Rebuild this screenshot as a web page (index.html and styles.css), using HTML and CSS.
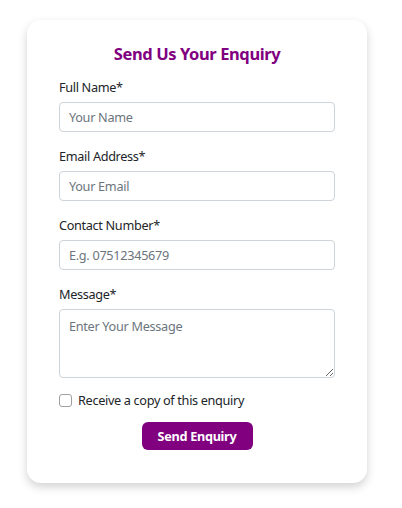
FILE: index.html
```html
<!DOCTYPE html>
<html>
<head>
<meta charset="utf-8">
<link rel="stylesheet" href="styles.css">
</head>
<body>
<form class="card">
  <h2 class="title">Send Us Your Enquiry</h2>
  <div class="field">
    <label class="label">Full Name*</label>
    <input class="input" type="text" placeholder="Your Name">
  </div>
  <div class="field">
    <label class="label">Email Address*</label>
    <input class="input" type="text" placeholder="Your Email">
  </div>
  <div class="field">
    <label class="label">Contact Number*</label>
    <input class="input" type="text" placeholder="E.g. 07512345679">
  </div>
  <div class="field field-last">
    <label class="label">Message*</label>
    <textarea class="input textarea" placeholder="Enter Your Message"></textarea>
  </div>
  <label class="check">
    <input type="checkbox" class="box">
    <span>Receive a copy of this enquiry</span>
  </label>
  <div class="actions">
    <button type="button" class="btn">Send Enquiry</button>
  </div>
</form>
</body>
</html>
```
FILE: styles.css
```css
html, body {
  margin: 0;
  padding: 0;
  background: #fff;
}
body {
  padding: 20px 0 25px 27px;
  font-family: "Noto Sans", "Open Sans", sans-serif;
  color: #212529;
}
.card {
  box-sizing: border-box;
  width: 340px;
  height: 463px;
  padding: 23px 32px 0 32px;
  background: #fff;
  border-radius: 14px;
  box-shadow: 0 4px 10px rgba(0,0,0,0.18);
  display: flex;
  flex-direction: column;
}
.title {
  margin: 0 0 12px 0;
  text-align: center;
  color: #800080;
  font-size: 16.5px;
  font-weight: 700;
  line-height: 22px;
  letter-spacing: -0.4px;
}
.field {
  display: flex;
  flex-direction: column;
  margin-bottom: 14px;
}
.field-last {
  margin-bottom: 12px;
}
.label {
  font-size: 12.7px;
  line-height: 20px;
  margin-bottom: 5px;
  letter-spacing: -0.33px;
}
.input {
  box-sizing: border-box;
  height: 30px;
  width: 100%;
  border: 1px solid #ced4da;
  border-radius: 4px;
  padding: 0 9px;
  font-family: inherit;
  font-size: 12.7px;
  letter-spacing: -0.3px;
  color: #212529;
  outline: none;
  margin: 0;
}
.input::placeholder {
  color: #6c757d;
}
.textarea {
  height: 69px;
  padding: 7px 9px;
  resize: vertical;
  display: block;
}
.check {
  display: flex;
  align-items: center;
  gap: 6px;
  font-size: 12.7px;
  line-height: 20px;
  letter-spacing: -0.33px;
}
.box {
  appearance: none;
  -webkit-appearance: none;
  margin: 0;
  width: 13px;
  height: 13px;
  border: 1px solid #a0a0a0;
  border-radius: 3px;
  background: #fff;
  box-sizing: border-box;
}
.actions {
  display: flex;
  justify-content: center;
  margin-top: 12px;
}
.btn {
  width: 111px;
  height: 28px;
  border: none;
  border-radius: 6px;
  background: #800080;
  color: #fff;
  font-family: inherit;
  font-weight: 700;
  font-size: 12.7px;
  letter-spacing: -0.3px;
  padding: 0;
}
```
